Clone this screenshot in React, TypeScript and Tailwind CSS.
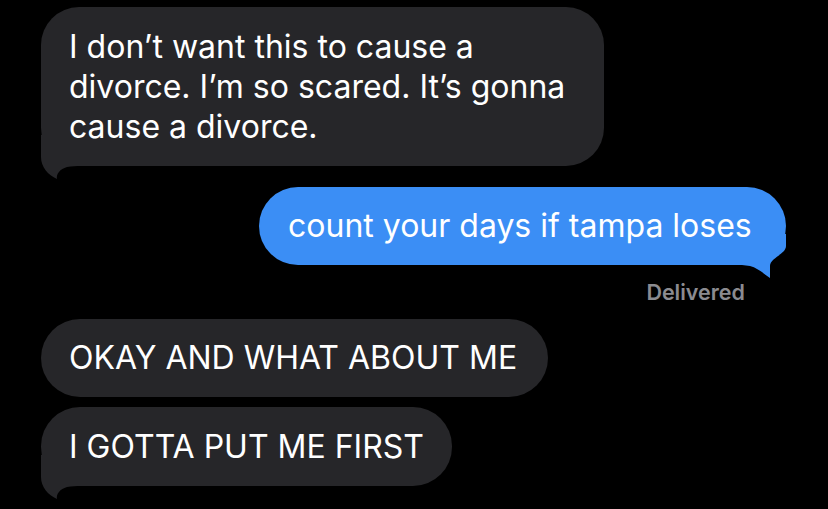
import React from 'react';

type Side = 'left' | 'right';

const Tail: React.FC<{ side: Side; color: string }> = ({ side, color }) => {
  // tail at the bottom corner: tip ~16px inside the edge, ~13px under the bubble
  const d =
    side === 'left'
      ? 'M0 0 L0 22 C0 32 7 40 16 44 C15 39 19 34 26 32 C31 31 35 31 40 31 L44 31 L44 0 Z'
      : 'M44 0 L44 12 C44 20 28 24 28 32 L28 44 C22 40 16 34 8 32 L0 31 L0 0 Z';
  return (
    <svg
      width="44"
      height="44"
      viewBox="0 0 44 44"
      className={`absolute bottom-[-13px] ${side === 'left' ? 'left-0' : 'right-0'}`}
    >
      <path d={d} fill={color} />
    </svg>
  );
};

interface BubbleProps {
  children: React.ReactNode;
  side?: Side;
  tail?: boolean;
  className?: string;
}

const Bubble: React.FC<BubbleProps> = ({ children, side = 'left', tail = false, className = '' }) => {
  const color = side === 'left' ? '#262629' : '#3b8ef5';
  return (
    <div
      className={`relative ${side === 'left' ? 'self-start bg-[#262629]' : 'self-end bg-[#3b8ef5]'} text-white text-[32px] leading-[40px] ${className}`}
    >
      {tail && <Tail side={side} color={color} />}
      <div className="relative whitespace-nowrap">{children}</div>
    </div>
  );
};

export default function App() {
  return (
    <div
      className="w-[828px] h-[509px] bg-black overflow-hidden flex flex-col pt-[7px] pl-[41px] pr-[42px]"
      style={{ fontFamily: 'Inter, "Liberation Sans", sans-serif' }}
    >
      {/* incoming */}
      <Bubble tail className="w-[563px] h-[159px] rounded-[38px] pl-[28px] pt-[20px]">
        I don’t want this to cause a
        <br />
        divorce. I’m so scared. It’s gonna
        <br />
        cause a divorce.
      </Bubble>

      {/* outgoing */}
      <Bubble side="right" tail className="mt-[21px] w-[527px] h-[78px] rounded-[39px] pl-[29px] pt-[19px]">
        count your days if tampa loses
      </Bubble>
      <div className="self-end mr-[41px] mt-[15px] text-[21.5px] leading-[24px] font-semibold text-[#8b8b90]">
        Delivered
      </div>

      {/* incoming group */}
      <Bubble className="mt-[15px] w-[507px] h-[78px] rounded-[39px] pl-[28px] pt-[19px]">
        OKAY AND WHAT ABOUT ME
      </Bubble>
      <Bubble tail className="mt-[10px] w-[411px] h-[79px] rounded-[39px] pl-[28px] pt-[20px]">
        I GOTTA PUT ME FIRST
      </Bubble>
    </div>
  );
}
